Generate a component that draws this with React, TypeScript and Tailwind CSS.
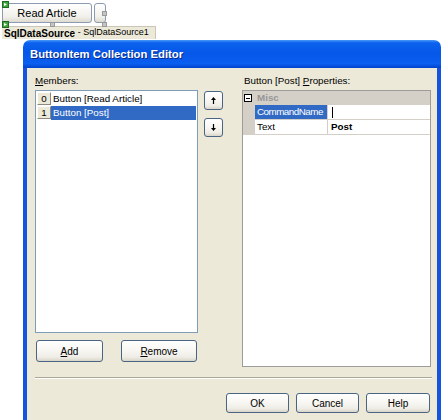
import React from 'react';

const xpButton =
  'flex items-center justify-center rounded-[3px] border border-[#4a6584] bg-[linear-gradient(to_bottom,#ffffff_0%,#f8f7f3_45%,#efede6_80%,#d9d5c9_100%)] text-[10px] text-black';

const SmartGlyph = () => (
  <svg width="7" height="7" viewBox="0 0 7 7">
    <rect x="0.5" y="0.5" width="6" height="6" fill="#3fa63f" stroke="#1f6b1f" />
    <path d="M2 2 L5 3.5 L2 5 Z" fill="#ffffff" />
  </svg>
);

const Handle = ({ className }: { className: string }) => (
  <div className={`absolute w-[5px] h-[5px] bg-[#c4c4c4] border border-[#9a9a9a] ${className}`} />
);

const ArrowUp = () => (
  <svg width="5" height="7" viewBox="0 0 5 7">
    <path d="M2.5 0 L5 3 H3.1 V7 H1.9 V3 H0 Z" fill="#000" />
  </svg>
);

const ArrowDown = () => (
  <svg width="5" height="7" viewBox="0 0 5 7">
    <path d="M2.5 7 L5 4 H3.1 V0 H1.9 V4 H0 Z" fill="#000" />
  </svg>
);

const members = [
  { idx: '0', name: 'Button [Read Article]', selected: false },
  { idx: '1', name: 'Button [Post]', selected: true },
];

export default function App() {
  return (
    <div className="w-[445px] h-[420px] overflow-hidden bg-white font-['Liberation_Sans',Arial,sans-serif] text-black">
      {/* designer surface */}
      <div className="h-[40px] pt-[3px] pl-[2px]">
        <div className="flex items-start">
          <div className="relative">
            <div className="w-[90px] h-[20px] rounded-[3px] border border-[#8a9bb3] bg-[linear-gradient(to_bottom,#ffffff,#f1f0ea_70%,#dedad0)] flex items-center justify-center text-[11px]">
              Read Article
            </div>
            <div className="absolute left-0 top-[-2px]"><SmartGlyph /></div>
            <div className="absolute left-0 top-[18px]"><SmartGlyph /></div>
            <Handle className="left-[48px] top-[19px]" />
          </div>
          <div className="relative ml-[2px]">
            <div className="w-[12px] h-[20px] rounded-[3px] border border-[#8a9bb3] bg-[linear-gradient(to_bottom,#ffffff,#f1f0ea_70%,#dedad0)]" />
            <Handle className="left-[8px] top-[8px]" />
            <Handle className="left-[8px] top-[19px]" />
          </div>
        </div>
        <div className="mt-[3px] w-[154px] h-[13px] bg-[#ece9d8] border-t border-r border-[#c9c6b8] flex items-center pl-[2px] whitespace-nowrap">
          <span className="text-[10px] font-bold">SqlDataSource</span>
          <span className="text-[9px]">&nbsp;- SqlDataSource1</span>
        </div>
      </div>

      {/* dialog */}
      <div className="ml-[23px] w-[418px] flex flex-col">
        <div className="h-[28px] rounded-t-[7px] bg-[linear-gradient(to_bottom,#4a9bf7_0%,#0c62ee_10%,#0557e8_45%,#0a5ef0_85%,#0043cc_100%)] flex items-center pl-[7px]">
          <span className="text-white font-bold text-[11.3px] [text-shadow:1px_1px_0_#0a2a8a]">
            ButtonItem Collection Editor
          </span>
        </div>
        <div className="h-[360px] border-x-[4px] border-[#1453de] bg-[#ece9d8] pt-[6px] pl-[8px] pr-[6px] text-[9.8px]">
          <div className="flex items-start">
            {/* members */}
            <div className="w-[163px] flex flex-col">
              <div className="h-[12px] leading-[12px] mb-[4px] pt-[1px]">
                <span className="underline underline-offset-[1px]">M</span>embers:
              </div>
              <div className="h-[243px] border border-[#7f9db9] bg-white p-[1px]">
                {members.map((m) => (
                  <div key={m.idx} className="flex h-[14px]">
                    <div className="w-[14px] h-[13px] bg-[#ece9d8] border border-t-white border-l-white border-r-[#8d8a7d] border-b-[#8d8a7d] flex items-center justify-center leading-none">
                      {m.idx}
                    </div>
                    <div
                      className={`flex-1 pl-[2px] flex items-center leading-none ${
                        m.selected ? 'bg-[#316ac5] text-white' : ''
                      }`}
                    >
                      {m.name}
                    </div>
                  </div>
                ))}
              </div>
              <div className="flex mt-[7px] pl-[1px] gap-[18px]">
                <button type="button" className={`${xpButton} w-[67px] h-[22px]`}>
                  <span className="underline underline-offset-[1px]">A</span>dd
                </button>
                <button type="button" className={`${xpButton} w-[76px] h-[22px]`}>
                  <span className="underline underline-offset-[1px]">R</span>emove
                </button>
              </div>
            </div>

            {/* up / down */}
            <div className="ml-[6px] mt-[17px] flex flex-col gap-[8px]">
              <button type="button" className={`${xpButton} w-[19px] h-[19px]`}>
                <ArrowUp />
              </button>
              <button type="button" className={`${xpButton} w-[19px] h-[19px]`}>
                <ArrowDown />
              </button>
            </div>

            {/* properties */}
            <div className="ml-[19px] w-[189px] flex flex-col">
              <div className="h-[12px] leading-[12px] mb-[4px] pl-[2px] pt-[1px]">
                Button [Post] <span className="underline underline-offset-[1px]">P</span>roperties:
              </div>
              <div className="h-[277px] border border-[#9c9c9c] bg-white">
                <div className="h-[14px] bg-[#d4d0c8] flex items-center pl-[1px]">
                  <div className="w-[8px] h-[8px] border border-black bg-white flex items-center justify-center">
                    <div className="w-[4px] h-[1px] bg-black" />
                  </div>
                  <span className="ml-[5px] font-bold text-[#979797] leading-none">Misc</span>
                </div>
                <div className="flex h-[15px] border-b border-[#d4d0c8]">
                  <div className="w-[12px] bg-[#d4d0c8]" />
                  <div className="w-[73px] bg-[#316ac5] text-white flex items-center pl-[2px] border-r border-[#d4d0c8] leading-none tracking-[-0.5px] whitespace-nowrap overflow-hidden">
                    CommandName
                  </div>
                  <div className="flex-1 flex items-center pl-[4px]">
                    <div className="w-[1px] h-[11px] bg-black" />
                  </div>
                </div>
                <div className="flex h-[15px] border-b border-[#d4d0c8]">
                  <div className="w-[12px] bg-[#d4d0c8]" />
                  <div className="w-[73px] flex items-center pl-[2px] border-r border-[#d4d0c8] leading-none">
                    Text
                  </div>
                  <div className="flex-1 flex items-center pl-[3px] font-bold leading-none">Post</div>
                </div>
              </div>
            </div>
          </div>

          <div className="mt-[10px] w-[397px] border-t border-b border-t-[#aca899] border-b-white" />

          <div className="mt-[14px] w-[396px] pr-[1px] flex justify-end gap-[7px]">
            <button type="button" className={`${xpButton} w-[63px] h-[20px]`}>OK</button>
            <button type="button" className={`${xpButton} w-[63px] h-[20px]`}>Cancel</button>
            <button type="button" className={`${xpButton} w-[64px] h-[20px]`}>Help</button>
          </div>
        </div>
      </div>
    </div>
  );
}
